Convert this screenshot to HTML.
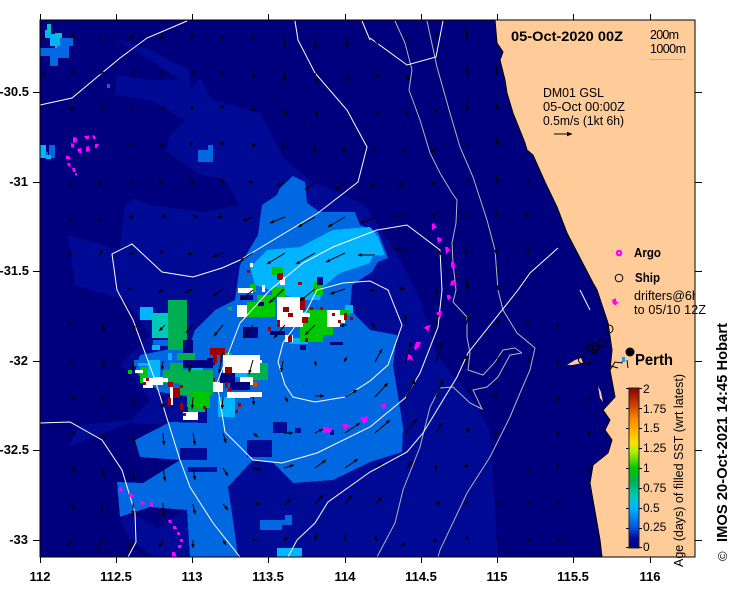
<!DOCTYPE html>
<html><head><meta charset="utf-8"><title>SST</title>
<style>
html,body{margin:0;padding:0;background:#fff}
svg{display:block}
text{font-family:"Liberation Sans",sans-serif;fill:#000}
.b{font-weight:bold}
</style></head><body>
<svg width="739" height="592" viewBox="0 0 739 592" xmlns="http://www.w3.org/2000/svg">
<defs>
<clipPath id="m"><rect x="40" y="20" width="655" height="537"/></clipPath>
<marker id="h" markerUnits="userSpaceOnUse" markerWidth="6" markerHeight="5" refX="4" refY="2" orient="auto"><path d="M0 .3L4.5 2L0 3.7z" fill="#000"/></marker>
<marker id="r" markerUnits="userSpaceOnUse" markerWidth="7" markerHeight="6" refX="5" refY="2.5" orient="auto"><path d="M0 0.2L5.5 2.5L0 4.8z" fill="#000"/></marker>
<linearGradient id="cb" x1="0" y1="1" x2="0" y2="0">
<stop offset="0" stop-color="#00007f"/><stop offset=".06" stop-color="#000a96"/><stop offset=".125" stop-color="#0050e0"/><stop offset=".25" stop-color="#00b4ff"/><stop offset=".32" stop-color="#00c8c0"/><stop offset=".42" stop-color="#00b050"/><stop offset=".5" stop-color="#00c800"/><stop offset=".6" stop-color="#b0f000"/><stop offset=".66" stop-color="#ffe000"/><stop offset=".8" stop-color="#ff8c00"/><stop offset=".9" stop-color="#c83c00"/><stop offset="1" stop-color="#8c0000"/>
</linearGradient>
</defs>
<g clip-path="url(#m)">
<rect x="40" y="20" width="655" height="537" fill="#00007f"/>
<g shape-rendering="crispEdges">
<!-- lighter navy -->
<path fill="#000a94" d="M113 38L150 50L189 70L190 90L200 78L212 100L260 113L285 160L310 180L365 205L400 260L420 300L437 355L452 375L485 412L495 460L498 557L240 557L190 557L160 557L157 530L190 505L190 470L165 440L170 425L130 423L68 447L80 425L130 420L150 400L135 380L120 365L150 335L125 300L75 285L68 235L120 250L125 205L160 180L170 135L185 120L150 100L115 95L117 75L150 80L180 80L150 60z"/>
<path fill="#000a94" d="M120 520L135 515L160 530L190 535L190 557L155 557L130 540z"/>
<path fill="#00007f" d="M125 150L165 150L200 175L225 180L240 205L205 212L150 205L125 195z"/>
<path fill="#00007f" d="M500 0H600V557H498L490 430L470 395z"/>
<!-- main blue -->
<path fill="#0068e0" d="M262 205L277 195L280 188L293 176L305 182L307 203L320 212L355 212L360 225L378 232L388 258L378 262L372 272L352 285L350 310L370 330L397 335L393 365L403 427L402 452L370 462L333 480L293 483L273 463L253 460L228 487L233 520L238 557L190 557L187 510L150 507L120 517L117 482L143 483L180 460L140 457L135 440L170 422L207 423L207 400L160 392L135 372L140 355L165 350L190 345L195 330L215 310L235 300L240 265L258 235z"/>
<path fill="#000a94" d="M273 422h14v11h-14zM247 440h25v17h-25zM180 448h27v12h-27zM188 467h29v5h-29zM330 430h4v5h-4zM295 428h6v5h-6z"/>
<path fill="#0068e0" d="M260 520h25v-5h7v10h-10v5h-22zM40 152h8v5h-8zM198 150h15v12h-15zM208 145h5v8h-5zM107 84h3v4h-3z"/>
<path fill="#0068e0" d="M55 38h18v8h-4v12h-11v8h-8v-10h-10v-8h15z"/>
<path fill="#0068e0" d="M134 360h10v6h-10zM153 340h20v6h-20zM49 145h6v13h-6z"/>
<!-- light blue -->
<path fill="#00b4ff" d="M250 267L267 250L300 247L333 230L370 227L378 237L385 255L373 256L370 263L340 273L323 287L320 300L300 300L270 290L255 285z"/>
<path fill="#00b4ff" d="M45 30h5v8h-5zM50 34h10v12h-10zM40 145h6v13h-6zM46 155h5v4h-5zM277 548h25v9h-25z"/>
<path fill="#00b4ff" d="M140 307h13v13h-13zM150 313h25v6h-25zM218 397h17v20h-17zM235 370h12v7h-12zM190 365h13v12h-13zM148 360h12v18h-12zM152 345h8v5h-8zM168 353h4v7h-4zM138 363h10v3h-10zM300 312h30v5h-30zM290 338h18v6h-18zM345 305h8v8h-8z"/>
<path fill="#00c8b8" d="M152 313h23v25h-23zM47 24h4v10h-4zM55 33h7v5h-7zM55 46h2v2h-2z"/>
<!-- greens -->
<path fill="#00b050" d="M168 300h19v50h-19zM177 353h18v7h-18zM170 363h13v7h-13zM163 370h50v13h-50zM180 382h33v13h-33zM187 395h13v12h-13zM188 407h17v5h-17zM247 363h21v17h-21zM253 357h4v6h-4z"/>
<path fill="#00c800" d="M272 267h11v8h-11zM247 302h28v15h-28zM257 295h16v8h-16zM272 287h13v10h-13zM313 282h10v13h-10zM290 298h10v17h-10zM308 310h25v25h-25zM300 323h23v19h-23zM340 310h10v5h-10zM228 307h4v3h-4zM192 392h18v16h-18zM225 353h7v9h-7zM140 367h8v16h-8zM128 370h4v4h-4zM250 284h6v8h-6z"/>
<!-- white -->
<path fill="#fff" d="M238 288h15v5h-15zM237 305h10v12h-10zM277 297h26v30h-26zM300 313h10v4h-10zM327 310h13v17h-13zM340 315h5v8h-5zM250 263h3v4h-3zM280 277h5v8h-5zM262 285h3v7h-3zM285 335h8v7h-8zM223 355h37v18h-37zM213 382h10v10h-10zM227 392h23v6h-23zM240 377h13v8h-13zM250 392h12v5h-12zM135 370h8v3h-8zM153 377h10v8h-10zM143 378h10v10h-10zM163 378h5v4h-5zM170 387h3v18h-3zM183 412h15v8h-15zM222 373h3v8h-3zM258 360h4v3h-4z"/>
<!-- navy -->
<path fill="#00007f" d="M240 295h13v5h-13zM243 327h15v11h-15zM270 331h15v4h-15zM317 277h6v8h-6zM258 302h6v4h-6zM330 342h13v3h-13zM183 340h10v13h-10zM183 360h30v8h-30zM220 373h15v10h-15zM230 382h20v8h-20zM207 358h8v7h-8zM300 345h6v5h-6z"/>
<!-- red -->
<path fill="#a00000" d="M277 273h6v7h-6zM247 270h3v3h-3zM298 282h4v3h-4zM283 307h6v5h-6zM288 313h5v4h-5zM277 320h3v7h-3zM300 297h5v13h-5zM310 307h3v3h-3zM320 307h3v3h-3zM302 317h6v6h-6zM332 313h3v3h-3zM338 320h3v3h-3zM344 313h3v7h-3zM350 317h3v3h-3zM268 327h3v4h-3zM288 335h4v7h-4zM305 338h3v4h-3zM173 388h7v10h-7zM168 382h5v5h-5zM180 403h3v7h-3zM180 385h3v3h-3zM168 398h3v7h-3zM146 378h3v3h-3zM143 382h3v3h-3zM225 367h7v6h-7zM210 348h15v7h-15zM213 355h4v8h-4zM220 355h2v7h-2zM225 382h3v6h-3zM228 388h4v3h-4zM238 403h3v4h-3zM235 410h3v3h-3zM203 406h3v3h-3zM183 413h3v3h-3zM213 378h2v3h-2z"/>
<path fill="#c85000" d="M253 382h4v5h-4z"/>
</g>
<!-- Land -->
<path fill="#ffcc99" stroke="#000" stroke-width="1" d="M495 20L497 43L503 52L500 60L505 80L507 93L513 113L525 143L527 150L533 155L545 182L557 207L567 233L580 258L593 283L597 290L608 323L612 350L610 370L615 397L603 410L610 420L605 430L612 440L608 453L593 465L590 483L600 540L602 557H695V20z"/>
<path fill="#ffcc99" d="M567 365L575 360L581 358L583 363L572 365z"/>
<path fill="#ffcc99" d="M598 386L601 392L603 402L600 398z"/>
<!-- grey contours -->
<g fill="none" stroke="#b4b4b4" stroke-width="1">
<path d="M395 21L405 43L412 70L409 90L420 120L430 153L440 173L452 193L457 200L456 223L452 243L453 263L456 290L453 302L467 317L467 337L470 353L468 370L483 375L495 362L503 350L515 348L522 353"/>
<path d="M377 557L395 523L403 490L420 447L430 407L440 388L453 387L470 403L482 409L473 390L487 387L498 377L510 355L522 353"/>
<path d="M427 21L437 67L450 113L460 147L473 177L487 220L495 250L498 290L503 310L517 333L535 348L530 370L520 393L510 417L490 457L467 493L440 550L438 557"/>
</g>
<!-- white contours -->
<g fill="none" stroke="#fff" stroke-width="1">
<path d="M40 105L72 98L102 73L120 58L147 38L187 21"/>
<path d="M295 21L298 40L315 73L347 110L367 147L358 182L318 213L240 260L222 268L193 277L162 272L132 244L112 254L117 290L133 320L155 380L180 460L190 487L213 523L240 557"/>
<path d="M362 21L370 40M370 38L407 65L436 57L443 21"/>
<path d="M270 290L240 323L227 357L217 383L225 432L253 460L282 463L317 453L370 427L405 398L420 373L438 327L442 290L440 250L407 225L377 230L333 247L303 263L270 290"/>
<path d="M307 310L283 343L278 362L285 385L293 397L315 402L345 397L370 381L388 365L402 325L388 290L370 281L343 283L317 290z"/>
<path d="M40 423L70 422L102 440L122 470L135 513L136 542L128 557"/>
<path d="M288 557L297 540L315 523L328 502L370 472L407 452L423 433L457 377L468 353L518 290L530 273L558 248"/>
<path d="M580 290L590 310"/>
</g>
<!-- arrows -->
<g fill="none" stroke="#000" stroke-width="1" marker-end="url(#h)">
<path d="M44 36l-3 2"/><path d="M75 34l-5 4"/><path d="M102 34l-3 5"/><path d="M133 36l-4 3"/><path d="M163 36l-4 3"/><path d="M193 35l-3 2"/><path d="M223 36l-1 3"/><path d="M253 37l0 3"/><path d="M284 38l0 9"/><path d="M315 38l1 10"/><path d="M346 38l1 9"/><path d="M376 40l2 4"/><path d="M406 38l2 4"/><path d="M436 32l0 8"/><path d="M466 28l1 12"/>
<path d="M44 73l-3 1"/><path d="M75 71l-4 3"/><path d="M102 72l-2 2"/><path d="M133 72l-1 3"/><path d="M163 72l-1 3"/><path d="M193 72l-1 3"/><path d="M223 72l0 3"/><path d="M253 74l2 3"/><path d="M284 73l1 8"/><path d="M315 73l2 10"/><path d="M346 75l4 7"/><path d="M376 74l3 4"/><path d="M406 75l3 5"/><path d="M466 65l2 10"/><path d="M496 65l1 10"/>
<path d="M72 109l-3 0"/><path d="M102 107l0 3"/><path d="M131 107l1 3"/><path d="M162 107l2 3"/><path d="M192 107l0 3"/><path d="M222 106l1 3"/><path d="M253 110l3 0"/><path d="M284 109l3 6"/><path d="M315 109l2 7"/><path d="M376 110l2 5"/><path d="M406 110l2 6"/><path d="M436 110l0 4"/><path d="M466 103l2 7"/><path d="M496 103l2 7"/>
<path d="M130 144l3 1"/><path d="M160 143l3 3"/><path d="M191 143l1 3"/><path d="M222 143l1 3"/><path d="M253 145l3 0"/><path d="M284 146l-2 3"/><path d="M315 146l-1 7"/><path d="M345 146l-2 7"/><path d="M375 147l-2 5"/><path d="M405 147l-2 5"/><path d="M436 146l-4 7"/><path d="M466 143l2 3"/><path d="M496 138l3 7"/>
<path d="M72 182l-3 5"/><path d="M102 182l-4 3"/><path d="M133 182l-3 0"/><path d="M158 178l5 5"/><path d="M190 178l3 6"/><path d="M219 178l5 5"/><path d="M253 182l-5 0"/><path d="M285 182l-8 4"/><path d="M315 182l-10 8"/><path d="M345 182l-10 8"/><path d="M375 184l-5 3"/><path d="M405 182l-7 5"/><path d="M436 182l-5 3"/><path d="M466 180l3 2"/><path d="M496 175l2 9"/><path d="M527 177l2 6"/>
<path d="M72 217l-3 5"/><path d="M102 217l-4 4"/><path d="M133 217l-4 0"/><path d="M163 215l3 3"/><path d="M193 215l5 3"/><path d="M223 217l-6 0"/><path d="M253 217l-10 4"/><path d="M285 217l-15 6"/><path d="M315 217l-17 10"/><path d="M345 217l-17 10"/><path d="M375 218l-15 5"/><path d="M406 216l-12 0"/><path d="M436 216l-5 0"/><path d="M466 216l3 2"/><path d="M496 210l0 7"/><path d="M527 213l0 5"/>
<path d="M71 251l-2 6"/><path d="M102 250l-2 5"/><path d="M133 253l-4 1"/><path d="M163 252l-4 -1"/><path d="M193 254l-6 0"/><path d="M223 253l-10 4"/><path d="M253 253l-13 8"/><path d="M285 253l-18 11"/><path d="M315 253l-19 11"/><path d="M345 253l-19 9"/><path d="M375 255l-17 0"/><path d="M409 252l-13 -4"/><path d="M436 248l5 7"/><path d="M466 248l0 7"/><path d="M496 247l0 7"/><path d="M528 247l0 7"/>
<path d="M130 289l-2 1"/><path d="M163 290l-5 2"/><path d="M193 289l-8 4"/><path d="M223 289l-10 7"/><path d="M253 290l-12 10"/><path d="M284 289l-15 14"/><path d="M315 289l-15 12"/><path d="M345 289l-15 5"/><path d="M375 291l-6 -1"/><path d="M405 289l-6 -1"/><path d="M436 288l0 7"/><path d="M466 280l2 10"/><path d="M497 285l1 5"/>
<path d="M71 325l-3 -3"/><path d="M102 323l2 9"/><path d="M133 323l2 7"/><path d="M165 325l-6 6"/><path d="M193 325l-7 8"/><path d="M223 325l-9 11"/><path d="M253 325l-9 13"/><path d="M285 325l-11 13"/><path d="M315 325l-10 10"/><path d="M347 325l-7 1"/><path d="M375 328l-3 -5"/><path d="M406 325l-1 -10"/><path d="M437 325l1 -12"/><path d="M466 325l3 -11"/><path d="M497 325l2 -6"/><path d="M528 323l0 3"/><path d="M558 323l0 4"/>
<path d="M70 361l3 3"/><path d="M102 361l2 7"/><path d="M133 361l-1 9"/><path d="M163 361l-1 9"/><path d="M192 361l-3 11"/><path d="M223 351l-4 22"/><path d="M253 360l-4 14"/><path d="M283 361l-2 11"/><path d="M315 361l1 5"/><path d="M347 357l-3 5"/><path d="M375 362l7 -13"/><path d="M406 362l5 -20"/><path d="M436 362l6 -20"/><path d="M467 362l-1 -7"/><path d="M497 362l3 -6"/><path d="M528 362l2 -5"/><path d="M558 362l0 3"/><path d="M589 362l0 4"/>
<path d="M72 397l3 2"/><path d="M102 397l2 5"/><path d="M133 397l1 8"/><path d="M163 397l0 11"/><path d="M193 397l-1 12"/><path d="M223 397l-1 12"/><path d="M253 397l1 8"/><path d="M285 397l3 5"/><path d="M315 396l9 0"/><path d="M345 397l12 -7"/><path d="M375 397l13 -14"/><path d="M406 397l9 -17"/><path d="M436 397l7 -17"/><path d="M467 397l2 -9"/><path d="M497 397l-3 -3"/><path d="M558 398l0 4"/><path d="M589 397l0 4"/>
<path d="M72 433l4 1"/><path d="M102 433l2 6"/><path d="M133 433l1 10"/><path d="M163 433l1 12"/><path d="M193 433l2 12"/><path d="M223 433l3 10"/><path d="M253 433l5 4"/><path d="M284 433l9 0"/><path d="M315 433l8 -4"/><path d="M345 433l15 -10"/><path d="M375 433l15 -13"/><path d="M406 433l11 -14"/><path d="M436 433l6 -10"/><path d="M467 433l2 -5"/><path d="M497 434l-3 -3"/><path d="M558 432l0 4"/><path d="M589 432l0 4"/>
<path d="M72 468l4 4"/><path d="M102 468l2 9"/><path d="M133 468l1 12"/><path d="M163 468l2 13"/><path d="M193 468l2 12"/><path d="M223 468l5 8"/><path d="M253 468l8 2"/><path d="M284 468l10 -3"/><path d="M315 468l11 -8"/><path d="M345 468l13 -9"/><path d="M375 468l8 -5"/><path d="M406 468l7 -6"/><path d="M436 468l0 2"/><path d="M467 466l-3 1"/><path d="M528 468l0 3"/><path d="M558 467l0 2"/><path d="M589 468l0 4"/>
<path d="M72 504l2 6"/><path d="M102 503l0 10"/><path d="M133 503l0 12"/><path d="M163 503l0 13"/><path d="M193 504l2 10"/><path d="M223 504l5 6"/><path d="M253 504l7 0"/><path d="M284 505l7 -6"/><path d="M315 504l8 -9"/><path d="M345 504l7 -9"/><path d="M375 504l7 -7"/><path d="M436 505l4 -3"/><path d="M467 503l-3 -1"/><path d="M498 503l3 1"/><path d="M528 503l3 1"/><path d="M558 503l3 1"/>
<path d="M72 540l-5 6"/><path d="M102 540l-5 10"/><path d="M133 540l-6 10"/><path d="M163 540l-4 8"/><path d="M193 540l0 8"/><path d="M223 540l3 5"/><path d="M253 540l4 0"/><path d="M287 537l-3 4"/><path d="M317 533l-2 8"/><path d="M346 533l-1 8"/><path d="M375 536l2 5"/><path d="M405 543l-4 3"/><path d="M436 540l-3 2"/><path d="M466 537l3 3"/><path d="M497 537l3 4"/><path d="M528 540l3 1"/><path d="M558 540l3 1"/>
<path d="M554 134l18 0" marker-end="url(#r)"/>
</g>
<!-- magenta drifters -->
<g fill="#ff00ff">
<path d="M73 137l4 1 0 4-4 1zM84 136l5-.5 0 3-3 1zM92 135l3 1 1 3-3 0zM71 143l3 1 0 4-3-1zM77 149l4-1 1 5-3 0zM86 147l3-1 1 5-4 1zM95 144l4 0-2 4-2 0zM66 156l3 0 2 3-5 0zM67 163l3 0 1 4-3-1zM72 168l3 0 1 4-3 0zM75 173l2 0 0 3-2-1z"/>
<path d="M119 488l3-1 1 4-4 1zM129 493l4 1 1 3-5 0zM140 501l3 0 3 3-5 1zM150 502l3 1 0 4-3-1zM168 520l3 0 1 3-3 0zM173 526l3 0 1 3-4 0zM177 532l3 0 0 3-3 0zM180 539l3 0 0 3-3 0zM178 545l4 0-1 3-3 0zM172 552l3 0 2 5-5 0z"/>
<path d="M323 427l4 0 5 2-1 3-8 1zM342 424l4 0 5 2-5 2-1 3zM360 418l8-2-1 5-3 3zM380 405l7-2-3 7-2-3zM408 354l4 2 1 5-3-2-3 2zM416 342l5 0-2 5-2 1-1 3-2-3zM426 326l5-1-2 4-1 4-1-3-3-2zM437 312l5-1-1 5-1 3-1-3-3-2zM447 295l3 0 2 4-2-1-1 3-2-3zM451 281l3-1 3 6-4-1-3 1zM451 262l3 0 2 7-2-2-1 2-2-2zM445 247l3 0 3 5-3-1-1 3-1 0zM437 237l4 1 1 3-3 1-1 2zM432 224l2-1 3 5-2 0-2 2-1 0zM612 300l4-2 0 3 3 2-3 1 1 2-4-2z"/>
</g>
<g fill="none" stroke="#000">
<circle cx="590" cy="348" r="4"/><circle cx="594" cy="348" r="5"/><circle cx="595" cy="348" r="2.5"/><circle cx="602" cy="343" r="4"/><circle cx="609" cy="329" r="4"/><circle cx="582" cy="360" r="3.5"/>
<path d="M610 370L615 362L622 363L623 358M628 368L627 360M611 366L618 368"/>
</g>
<circle cx="630" cy="352" r="4.5" fill="#000"/>
<rect x="622" y="357" width="3" height="5" fill="#00a0ff"/>
<!-- legend -->
<circle cx="619" cy="253" r="2.8" fill="#ff00ff" stroke="#ff00ff" stroke-width="1" />
<circle cx="619" cy="253" r="1" fill="#ffcc99"/>
<circle cx="619" cy="278" r="3.8" fill="none" stroke="#000"/>
<line x1="650" y1="59.5" x2="683" y2="59.5" stroke="#b4b4b4"/>
<!-- colourbar -->
<rect x="629" y="388" width="10" height="160" fill="url(#cb)" stroke="#222"/>
<path stroke="#000" d="M626 388.5h3M639 388.5h3M626 408.5h3M639 408.5h3M626 428.5h3M639 428.5h3M626 448.5h3M639 448.5h3M626 468.5h3M639 468.5h3M626 488.5h3M639 488.5h3M626 508.5h3M639 508.5h3M626 528.5h3M639 528.5h3M626 547.5h3M639 547.5h3"/>
<!-- map text -->
<text class="b" x="511" y="41" font-size="14" textLength="112" lengthAdjust="spacingAndGlyphs">05-Oct-2020 00Z</text>
<text x="650" y="39" font-size="12.5" textLength="29">200m</text>
<text x="650" y="53" font-size="12.5" textLength="36">1000m</text>
<text x="543" y="97" font-size="13" textLength="61" lengthAdjust="spacingAndGlyphs">DM01 GSL</text>
<text x="543" y="111" font-size="13" textLength="82" lengthAdjust="spacingAndGlyphs">05-Oct 00:00Z</text>
<text x="543" y="125" font-size="13" textLength="81" lengthAdjust="spacingAndGlyphs">0.5m/s (1kt 6h)</text>
<text class="b" x="634" y="257" font-size="13" textLength="27" lengthAdjust="spacingAndGlyphs">Argo</text>
<text class="b" x="635" y="282" font-size="13" textLength="25" lengthAdjust="spacingAndGlyphs">Ship</text>
<text class="b" x="635" y="365" font-size="15.5" textLength="38" lengthAdjust="spacingAndGlyphs">Perth</text>
<g font-size="12">
<text x="643" y="393">2</text><text x="643" y="413">1.75</text><text x="643" y="432">1.5</text><text x="643" y="452">1.25</text><text x="643" y="472">1</text><text x="643" y="492">0.75</text><text x="643" y="512">0.5</text><text x="643" y="531">0.25</text><text x="643" y="551">0</text>
</g>
</g>
<rect x="40" y="20" width="655" height="537" fill="none" stroke="#000" stroke-width="1"/>
<svg x="634" y="288" width="61" height="14"><text x="0" y="12" font-size="12.5">drifters@6h</text></svg>
<text x="634" y="314" font-size="12.5" textLength="72">to 05/10 12Z</text>
<!-- ticks -->
<path stroke="#000" d="M40.5 14v6M116.5 14v6M192.5 14v6M268.5 14v6M345.5 14v6M421.5 14v6M497.5 14v6M573.5 14v6M650.5 14v6M40.5 557v6M116.5 557v6M192.5 557v6M268.5 557v6M345.5 557v6M421.5 557v6M497.5 557v6M573.5 557v6M650.5 557v6M33 92.5h7M33 182.5h7M33 271.5h7M33 361.5h7M33 450.5h7M33 540.5h7M695 92.5h7M695 182.5h7M695 271.5h7M695 361.5h7M695 450.5h7M695 540.5h7"/>
<g text-anchor="middle">
<text class="b" font-size="13" x="40" y="581">112</text><text class="b" font-size="13" x="116" y="581">112.5</text><text class="b" font-size="13" x="192" y="581">113</text><text class="b" font-size="13" x="268" y="581">113.5</text><text class="b" font-size="13" x="345" y="581">114</text><text class="b" font-size="13" x="421" y="581">114.5</text><text class="b" font-size="13" x="497" y="581">115</text><text class="b" font-size="13" x="573" y="581">115.5</text><text class="b" font-size="13" x="650" y="581">116</text>
</g>
<g font-size="13" text-anchor="end">
<text class="b" x="29" y="96">-30.5</text><text class="b" x="28" y="186">-31</text><text class="b" x="29" y="275">-31.5</text><text class="b" x="28" y="365">-32</text><text class="b" x="29" y="454">-32.5</text><text class="b" x="28" y="544">-33</text>
</g>
<text transform="translate(683 567) rotate(-90)" font-size="12.5" textLength="193">Age (days) of filled SST (wrt latest)</text>
<text class="b" transform="translate(727 542) rotate(-90)" font-size="14.5" textLength="219" lengthAdjust="spacingAndGlyphs">IMOS 20-Oct-2021 14:45 Hobart</text>
<text transform="translate(727 561) rotate(-90)" font-size="13">©</text>
</svg>
</body></html>
